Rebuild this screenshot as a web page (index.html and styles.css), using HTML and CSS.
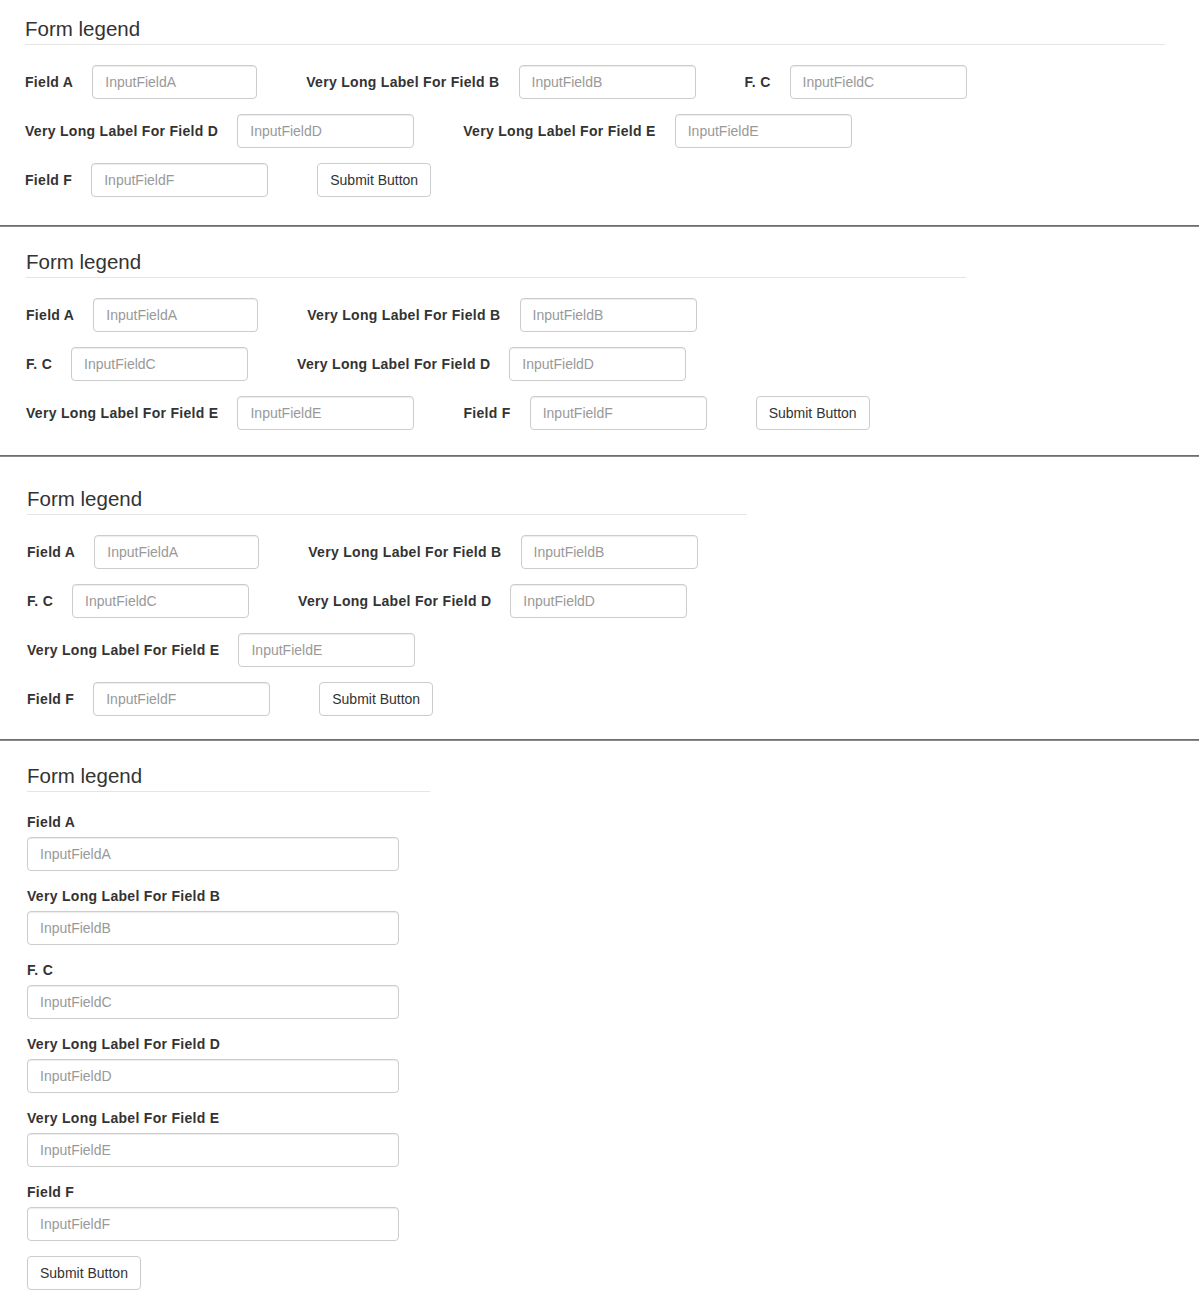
FILE: index.html
```html
<!DOCTYPE html>
<html lang="en">
<head>
<meta charset="utf-8">
<title>Form legend</title>
<link rel="stylesheet" href="styles.css">
</head>
<body>
<section class="block block-lg">
  <fieldset class="set">
    <legend class="legend">Form legend</legend>
    <form class="inline-form">
      <div class="group"><label class="lbl">Field A</label><input class="field field-a" placeholder="InputFieldA"></div>
      <div class="group"><label class="lbl">Very Long Label For Field B</label><input class="field" placeholder="InputFieldB"></div>
      <div class="group"><label class="lbl">F. C</label><input class="field" placeholder="InputFieldC"></div>
      <div class="group"><label class="lbl">Very Long Label For Field D</label><input class="field" placeholder="InputFieldD"></div>
      <div class="group"><label class="lbl">Very Long Label For Field E</label><input class="field" placeholder="InputFieldE"></div>
      <div class="group"><label class="lbl">Field F</label><input class="field" placeholder="InputFieldF"></div>
      <div class="group"><button type="button" class="btn">Submit Button</button></div>
    </form>
  </fieldset>
</section>
<hr class="sep sep-1">
<section class="block block-md">
  <fieldset class="set">
    <legend class="legend">Form legend</legend>
    <form class="inline-form">
      <div class="group"><label class="lbl">Field A</label><input class="field field-a" placeholder="InputFieldA"></div>
      <div class="group"><label class="lbl">Very Long Label For Field B</label><input class="field" placeholder="InputFieldB"></div>
      <div class="group"><label class="lbl">F. C</label><input class="field" placeholder="InputFieldC"></div>
      <div class="group"><label class="lbl">Very Long Label For Field D</label><input class="field" placeholder="InputFieldD"></div>
      <div class="group"><label class="lbl">Very Long Label For Field E</label><input class="field" placeholder="InputFieldE"></div>
      <div class="group"><label class="lbl">Field F</label><input class="field" placeholder="InputFieldF"></div>
      <div class="group"><button type="button" class="btn">Submit Button</button></div>
    </form>
  </fieldset>
</section>
<hr class="sep sep-2">
<section class="block block-sm">
  <fieldset class="set">
    <legend class="legend">Form legend</legend>
    <form class="inline-form">
      <div class="group"><label class="lbl">Field A</label><input class="field field-a" placeholder="InputFieldA"></div>
      <div class="group"><label class="lbl">Very Long Label For Field B</label><input class="field" placeholder="InputFieldB"></div>
      <div class="group"><label class="lbl">F. C</label><input class="field" placeholder="InputFieldC"></div>
      <div class="group"><label class="lbl">Very Long Label For Field D</label><input class="field" placeholder="InputFieldD"></div>
      <div class="group"><label class="lbl">Very Long Label For Field E</label><input class="field" placeholder="InputFieldE"></div>
      <div class="group"><label class="lbl">Field F</label><input class="field" placeholder="InputFieldF"></div>
      <div class="group"><button type="button" class="btn">Submit Button</button></div>
    </form>
  </fieldset>
</section>
<hr class="sep sep-3">
<section class="block block-xs">
  <fieldset class="set">
    <legend class="legend">Form legend</legend>
    <form class="stack-form">
      <div class="stack-group"><label class="lbl">Field A</label><input class="field" placeholder="InputFieldA"></div>
      <div class="stack-group"><label class="lbl">Very Long Label For Field B</label><input class="field" placeholder="InputFieldB"></div>
      <div class="stack-group"><label class="lbl">F. C</label><input class="field" placeholder="InputFieldC"></div>
      <div class="stack-group"><label class="lbl">Very Long Label For Field D</label><input class="field" placeholder="InputFieldD"></div>
      <div class="stack-group"><label class="lbl">Very Long Label For Field E</label><input class="field" placeholder="InputFieldE"></div>
      <div class="stack-group"><label class="lbl">Field F</label><input class="field" placeholder="InputFieldF"></div>
      <div class="stack-group"><button type="button" class="btn">Submit Button</button></div>
    </form>
  </fieldset>
</section>
</body>
</html>
```
FILE: styles.css
```css
* {
  box-sizing: border-box;
}

html, body {
  margin: 0;
  padding: 0;
  background: #fff;
}

body {
  font-family: "Liberation Sans", Arial, Helvetica, sans-serif;
  font-size: 14px;
  line-height: 20px;
  color: #333;
}

.block-lg { padding: 14px 0 0 25px; }
.block-md { padding: 20px 0 0 26px; }
.block-sm { padding: 27px 0 0 27px; }
.block-xs { padding: 20px 0 0 27px; }

.block-lg .set { width: 1140px; }
.block-md .set { width: 940px; }
.block-sm .set { width: 720px; }
.block-xs .set { width: 403px; }

.set {
  margin: 0;
  padding: 0;
  border: 0;
  min-width: 0;
}

.legend {
  display: block;
  width: 100%;
  padding: 0;
  margin: 0 0 20px 0;
  font-size: 20.5px;
  line-height: 30px;
  color: #333;
  border-bottom: 1px solid #e5e5e5;
}

.inline-form {
  display: flex;
  flex-wrap: wrap;
  align-items: center;
}

.group {
  display: flex;
  align-items: center;
  margin: 0 49px 15px 0;
}

.lbl {
  font-weight: bold;
  letter-spacing: 0.3px;
  white-space: nowrap;
}

.group .lbl {
  margin-right: 19px;
}

.field {
  display: block;
  width: 177px;
  height: 34px;
  padding: 6px 12px;
  font-family: inherit;
  font-size: 14px;
  line-height: 20px;
  color: #555;
  background: #fff;
  border: 1px solid #ccc;
  border-radius: 4px;
  box-shadow: inset 0 1px 1px rgba(0, 0, 0, 0.075);
  outline: none;
}

.field-a {
  width: 165px;
}

.field::placeholder {
  color: #999;
  opacity: 1;
}

.btn {
  display: inline-block;
  height: 34px;
  padding: 6px 12px;
  font-family: inherit;
  font-size: 14px;
  line-height: 20px;
  color: #333;
  background: #fff;
  border: 1px solid #ccc;
  border-radius: 4px;
  cursor: pointer;
}

.stack-group {
  margin-bottom: 15px;
}

.stack-group .lbl {
  display: block;
  margin-bottom: 5px;
}

.stack-group .field {
  width: 372px;
}

.sep {
  height: 0;
  width: calc(100% - 1px);
  margin: 0;
  border: 0;
  border-top: 1px solid #6e6e6e;
  border-bottom: 1px solid #8a8a8a;
}

.sep-1 { margin-top: 13px; }
.sep-2 { margin-top: 10px; }
.sep-3 { margin-top: 8px; }
```
